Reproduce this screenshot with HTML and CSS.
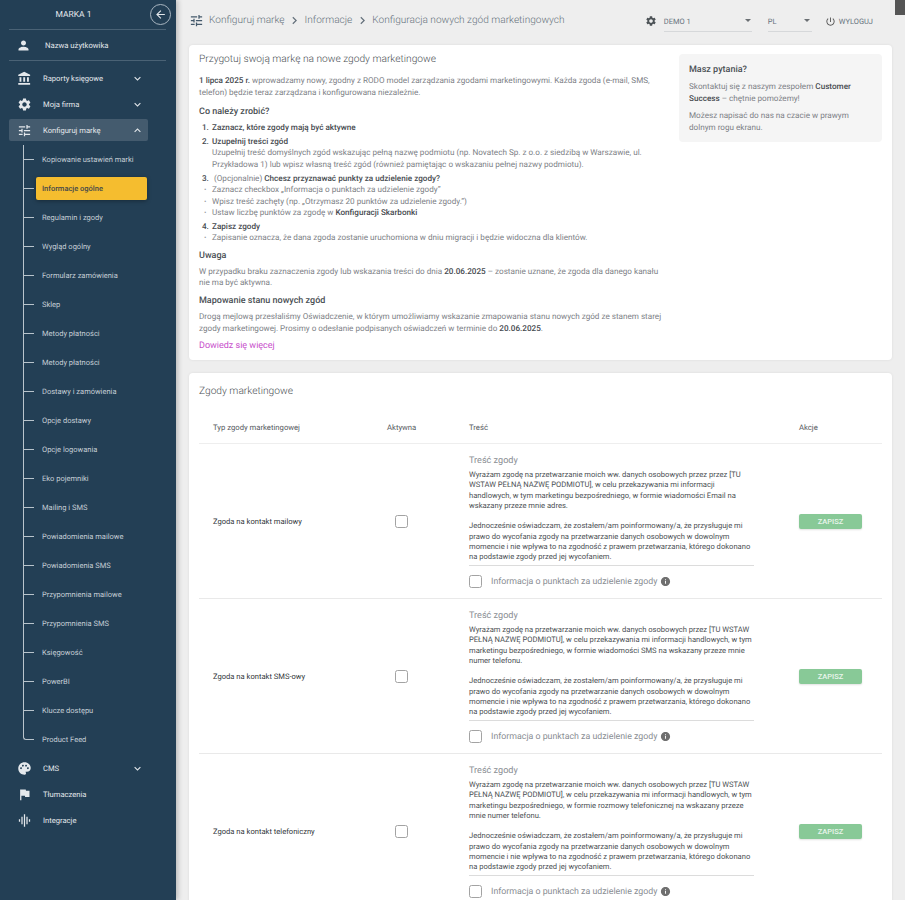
FILE: index.html
```html
<!DOCTYPE html>
<html lang="pl">
<head>
<meta charset="utf-8">
<title>Konfiguracja nowych zgód marketingowych</title>
<link rel="stylesheet" href="styles.css">
</head>
<body>
<svg class="sprite" aria-hidden="true">
<symbol id="i-person" viewBox="0 0 24 24"><path d="M12 12c2.21 0 4-1.79 4-4s-1.79-4-4-4-4 1.79-4 4 1.79 4 4 4zm0 2c-2.67 0-8 1.34-8 4v2h16v-2c0-2.66-5.33-4-8-4z"/></symbol>
<symbol id="i-bank" viewBox="0 0 24 24"><path d="M4 10v7h3v-7H4zm6 0v7h3v-7h-3zM2 22h19v-3H2v3zm14-12v7h3v-7h-3zm-4.5-9L2 6v2h19V6l-9.5-5z"/></symbol>
<symbol id="i-gear" viewBox="0 0 24 24"><path d="M19.14 12.94c.04-.3.06-.61.06-.94 0-.32-.02-.64-.07-.94l2.03-1.58c.18-.14.23-.41.12-.61l-1.92-3.32c-.12-.22-.37-.29-.59-.22l-2.39.96c-.5-.38-1.03-.7-1.62-.94l-.36-2.54c-.04-.24-.24-.41-.48-.41h-3.84c-.24 0-.43.17-.47.41l-.36 2.54c-.59.24-1.13.57-1.62.94l-2.39-.96c-.22-.08-.47 0-.59.22L2.74 8.87c-.12.21-.08.47.12.61l2.03 1.58c-.05.3-.09.63-.09.94s.02.64.07.94l-2.03 1.58c-.18.14-.23.41-.12.61l1.92 3.32c.12.22.37.29.59.22l2.39-.96c.5.38 1.03.7 1.62.94l.36 2.54c.05.24.24.41.48.41h3.84c.24 0 .44-.17.47-.41l.36-2.54c.59-.24 1.13-.56 1.62-.94l2.39.96c.22.08.47 0 .59-.22l1.92-3.32c.12-.22.07-.47-.12-.61l-2.01-1.58zM12 15.6c-1.98 0-3.6-1.62-3.6-3.6s1.62-3.6 3.6-3.6 3.6 1.62 3.6 3.6-1.62 3.6-3.6 3.6z"/></symbol>
<symbol id="i-tune" viewBox="0 0 24 24"><path d="M3 17v2h6v-2H3zM3 5v2h10V5H3zm10 16v-2h8v-2h-8v-2h-2v6h2zM7 9v2H3v2h4v2h2V9H7zm14 4v-2H11v2h10zm-6-4h2V7h4V5h-4V3h-2v6z"/></symbol>
<symbol id="i-palette" viewBox="0 0 24 24"><path d="M12 2C6.49 2 2 6.49 2 12s4.49 10 10 10c1.38 0 2.5-1.12 2.5-2.5 0-.61-.23-1.2-.64-1.67-.08-.1-.13-.21-.13-.33 0-.28.22-.5.5-.5H16c3.31 0 6-2.69 6-6 0-4.96-4.49-9-10-9zm5.5 11c-.83 0-1.5-.67-1.5-1.5s.67-1.5 1.5-1.5 1.5.67 1.5 1.5-.67 1.5-1.5 1.5zm-3-4c-.83 0-1.5-.67-1.5-1.5S13.67 6 14.5 6s1.5.67 1.5 1.5S15.33 9 14.5 9zM5 11.5c0-.83.67-1.5 1.5-1.5s1.5.67 1.5 1.5S7.33 13 6.5 13 5 12.33 5 11.5zm6-4c0 .83-.67 1.5-1.5 1.5S8 8.33 8 7.5 8.67 6 9.5 6s1.5.67 1.5 1.5z"/></symbol>
<symbol id="i-flag" viewBox="0 0 24 24"><path d="M14.4 6L14 4H5v17h2v-7h5.6l.4 2h7V6z"/></symbol>
<symbol id="i-eq" viewBox="0 0 24 24"><path d="M7 18h2V6H7v12zm4 4h2V2h-2v20zm-8-8h2v-4H3v4zm12 4h2V6h-2v12zm4-8v4h2v-4h-2z"/></symbol>
<symbol id="i-power" viewBox="0 0 24 24"><path d="M13 3h-2v10h2V3zm4.83 2.17l-1.42 1.42C17.99 7.86 19 9.81 19 12c0 3.87-3.13 7-7 7s-7-3.13-7-7c0-2.19 1.01-4.14 2.58-5.42L6.17 5.17C4.23 6.82 3 9.26 3 12c0 4.97 4.03 9 9 9s9-4.03 9-9c0-2.74-1.23-5.18-3.17-6.83z"/></symbol>
<symbol id="i-info" viewBox="0 0 24 24"><path d="M12 2C6.48 2 2 6.48 2 12s4.48 10 10 10 10-4.48 10-10S17.52 2 12 2zm1 15h-2v-6h2v6zm0-8h-2V7h2v2z"/></symbol>
<symbol id="i-back" viewBox="0 0 24 24"><path d="M20 11H7.83l5.59-5.59L12 4l-8 8 8 8 1.41-1.41L7.83 13H20v-2z"/></symbol>
<symbol id="i-down" viewBox="0 0 24 24"><path d="M16.59 8.59L12 13.17 7.41 8.59 6 10l6 6 6-6z"/></symbol>
<symbol id="i-up" viewBox="0 0 24 24"><path d="M12 8l-6 6 1.41 1.41L12 10.83l4.59 4.58L18 14z"/></symbol>
<symbol id="i-right" viewBox="0 0 24 24"><path d="M10 6L8.59 7.41 13.17 12l-4.58 4.59L10 18l6-6z"/></symbol>
</svg>

<div class="app">
  <aside class="sidebar">
    <div class="brand">
      <span class="brand-name">MARKA 1</span>
      <span class="back"><svg class="ic-back"><use href="#i-back"/></svg></span>
    </div>
    <div class="user">
      <svg class="ic-user"><use href="#i-person"/></svg>
      <span>Nazwa użytkowika</span>
    </div>
    <nav class="menu">
      <div class="item"><svg class="ic"><use href="#i-bank"/></svg><span class="label">Raporty księgowe</span><svg class="chev"><use href="#i-down"/></svg></div>
      <div class="item"><svg class="ic"><use href="#i-gear"/></svg><span class="label">Moja firma</span><svg class="chev"><use href="#i-down"/></svg></div>
      <div class="item open"><svg class="ic"><use href="#i-tune"/></svg><span class="label">Konfiguruj markę</span><svg class="chev"><use href="#i-up"/></svg></div>
      <ul class="sub">
        <li><i class="tick"></i><span class="sub-label">Kopiowanie ustawień marki</span></li>
        <li><i class="tick"></i><span class="sub-label current">Informacje ogólne</span></li>
        <li><i class="tick"></i><span class="sub-label">Regulamin i zgody</span></li>
        <li><i class="tick"></i><span class="sub-label">Wygląd ogólny</span></li>
        <li><i class="tick"></i><span class="sub-label">Formularz zamówienia</span></li>
        <li><i class="tick"></i><span class="sub-label">Sklep</span></li>
        <li><i class="tick"></i><span class="sub-label">Metody płatności</span></li>
        <li><i class="tick"></i><span class="sub-label">Metody płatności</span></li>
        <li><i class="tick"></i><span class="sub-label">Dostawy i zamówienia</span></li>
        <li><i class="tick"></i><span class="sub-label">Opcje dostawy</span></li>
        <li><i class="tick"></i><span class="sub-label">Opcje logowania</span></li>
        <li><i class="tick"></i><span class="sub-label">Eko pojemniki</span></li>
        <li><i class="tick"></i><span class="sub-label">Mailing i SMS</span></li>
        <li><i class="tick"></i><span class="sub-label">Powiadomienia mailowe</span></li>
        <li><i class="tick"></i><span class="sub-label">Powiadomienia SMS</span></li>
        <li><i class="tick"></i><span class="sub-label">Przypomnienia mailowe</span></li>
        <li><i class="tick"></i><span class="sub-label">Przypomnienia SMS</span></li>
        <li><i class="tick"></i><span class="sub-label">Księgowość</span></li>
        <li><i class="tick"></i><span class="sub-label">PowerBI</span></li>
        <li><i class="tick"></i><span class="sub-label">Klucze dostępu</span></li>
        <li class="last"><i class="tick"></i><span class="sub-label">Product Feed</span></li>
      </ul>
      <div class="item"><svg class="ic"><use href="#i-palette"/></svg><span class="label">CMS</span><svg class="chev"><use href="#i-down"/></svg></div>
      <div class="item"><svg class="ic"><use href="#i-flag"/></svg><span class="label">Tłumaczenia</span></div>
      <div class="item"><svg class="ic"><use href="#i-eq"/></svg><span class="label">Integracje</span></div>
    </nav>
  </aside>

  <main class="main">
    <div class="scroll-thumb"></div>
    <header class="topbar">
      <div class="crumbs">
        <svg class="crumb-ic"><use href="#i-tune"/></svg>
        <span>Konfiguruj markę</span>
        <svg class="crumb-sep"><use href="#i-right"/></svg>
        <span>Informacje</span>
        <svg class="crumb-sep"><use href="#i-right"/></svg>
        <span>Konfiguracja nowych zgód marketingowych</span>
      </div>
      <div class="tools">
        <svg class="tool-gear"><use href="#i-gear"/></svg>
        <div class="select demo"><span>DEMO 1</span><i class="caret"></i></div>
        <div class="select lang"><span>PL</span><i class="caret"></i></div>
        <div class="logout"><svg class="power"><use href="#i-power"/></svg><span>WYLOGUJ</span></div>
      </div>
    </header>

    <section class="card intro">
      <div class="intro-main">
        <h2 class="card-title">Przygotuj swoją markę na nowe zgody marketingowe</h2>
        <p class="p-lead"><b>1 lipca 2025 r.</b> wprowadzamy nowy, zgodny z RODO model zarządzania zgodami marketingowymi. Każda zgoda (e-mail, SMS, telefon) będzie teraz zarządzana i konfigurowana niezależnie.</p>
        <h3 class="h-todo">Co należy zrobić?</h3>
        <ol class="steps">
          <li class="step"><span class="num">1.</span><div><b>Zaznacz, które zgody mają być aktywne</b></div></li>
          <li class="step"><span class="num">2.</span><div><b>Uzupełnij treści zgód</b><br>Uzupełnij treść domyślnych zgód wskazując pełną nazwę podmiotu (np. Novatech Sp. z o.o. z siedzibą w Warszawie, ul. Przykładowa 1) lub wpisz własną treść zgód (również pamiętając o wskazaniu pełnej nazwy podmiotu).</div></li>
          <li class="step"><span class="num"><b>3.</b></span><div class="opt">(Opcjonalnie) <b>Chcesz przyznawać punkty za udzielenie zgody?</b></div></li>
          <li class="dot">Zaznacz checkbox „Informacja o punktach za udzielenie zgody”</li>
          <li class="dot">Wpisz treść zachęty (np. „Otrzymasz 20 punktów za udzielenie zgody.”)</li>
          <li class="dot"><span>Ustaw liczbę punktów za zgodę w <b>Konfiguracji Skarbonki</b></span></li>
          <li class="step"><span class="num">4.</span><div><b>Zapisz zgody</b></div></li>
          <li class="dot">Zapisanie oznacza, że dana zgoda zostanie uruchomiona w dniu migracji i będzie widoczna dla klientów.</li>
        </ol>
        <h3 class="h-sec">Uwaga</h3>
        <p class="p-sec">W przypadku braku zaznaczenia zgody lub wskazania treści do dnia <b>20.06.2025</b> – zostanie uznane, że zgoda dla danego kanału nie ma być aktywna.</p>
        <h3 class="h-sec">Mapowanie stanu nowych zgód</h3>
        <p class="p-sec p-map">Drogą mejlową przesłaliśmy Oświadczenie, w którym umożliwiamy wskazanie zmapowania stanu nowych zgód ze stanem starej zgody marketingowej. Prosimy o odesłanie podpisanych oświadczeń w terminie do <b>20.06.2025</b>.</p>
        <a class="more">Dowiedz się więcej</a>
      </div>
      <aside class="help">
        <h3 class="help-title">Masz pytania?</h3>
        <p>Skontaktuj się z naszym zespołem <b>Customer Success</b> – chętnie pomożemy!</p>
        <p>Możesz napisać do nas na czacie w prawym dolnym rogu ekranu.</p>
      </aside>
    </section>

    <section class="card consents">
      <h2 class="card-title">Zgody marketingowe</h2>
      <div class="row head">
        <div class="cell">Typ zgody marketingowej</div>
        <div class="cell">Aktywna</div>
        <div class="cell">Treść</div>
        <div class="cell">Akcje</div>
      </div>

      <div class="row">
        <div class="cell name">Zgoda na kontakt mailowy</div>
        <div class="cell"><span class="check"></span></div>
        <div class="cell body">
          <div class="field-label">Treść zgody</div>
          <div class="field-text">Wyrażam zgodę na przetwarzanie moich ww. danych osobowych przez przez [TU WSTAW PEŁNĄ NAZWĘ PODMIOTU], w celu przekazywania mi informacji handlowych, w tym marketingu bezpośredniego, w formie wiadomości Email na wskazany przeze mnie adres.<br><br>Jednocześnie oświadczam, że zostałem/am poinformowany/a, że przysługuje mi prawo do wycofania zgody na przetwarzanie danych osobowych w dowolnym momencie i nie wpływa to na zgodność z prawem przetwarzania, którego dokonano na podstawie zgody przed jej wycofaniem.</div>
          <div class="points"><span class="check"></span><span class="points-label">Informacja o punktach za udzielenie zgody</span><svg class="info"><use href="#i-info"/></svg></div>
        </div>
        <div class="cell"><button class="save">ZAPISZ</button></div>
      </div>

      <div class="row">
        <div class="cell name">Zgoda na kontakt SMS-owy</div>
        <div class="cell"><span class="check"></span></div>
        <div class="cell body">
          <div class="field-label">Treść zgody</div>
          <div class="field-text">Wyrażam zgodę na przetwarzanie moich ww. danych osobowych przez [TU WSTAW PEŁNĄ NAZWĘ PODMIOTU], w celu przekazywania mi informacji handlowych, w tym marketingu bezpośredniego, w formie wiadomości SMS na wskazany przeze mnie numer telefonu.<br><br>Jednocześnie oświadczam, że zostałem/am poinformowany/a, że przysługuje mi prawo do wycofania zgody na przetwarzanie danych osobowych w dowolnym momencie i nie wpływa to na zgodność z prawem przetwarzania, którego dokonano na podstawie zgody przed jej wycofaniem.</div>
          <div class="points"><span class="check"></span><span class="points-label">Informacja o punktach za udzielenie zgody</span><svg class="info"><use href="#i-info"/></svg></div>
        </div>
        <div class="cell"><button class="save">ZAPISZ</button></div>
      </div>

      <div class="row">
        <div class="cell name">Zgoda na kontakt telefoniczny</div>
        <div class="cell"><span class="check"></span></div>
        <div class="cell body">
          <div class="field-label">Treść zgody</div>
          <div class="field-text">Wyrażam zgodę na przetwarzanie moich ww. danych osobowych przez [TU WSTAW PEŁNĄ NAZWĘ PODMIOTU], w celu przekazywania mi informacji handlowych, w tym marketingu bezpośredniego, w formie rozmowy telefonicznej na wskazany przeze mnie numer telefonu.<br><br>Jednocześnie oświadczam, że zostałem/am poinformowany/a, że przysługuje mi prawo do wycofania zgody na przetwarzanie danych osobowych w dowolnym momencie i nie wpływa to na zgodność z prawem przetwarzania, którego dokonano na podstawie zgody przed jej wycofaniem.</div>
          <div class="points"><span class="check"></span><span class="points-label">Informacja o punktach za udzielenie zgody</span><svg class="info"><use href="#i-info"/></svg></div>
        </div>
        <div class="cell"><button class="save">ZAPISZ</button></div>
      </div>
    </section>
  </main>
</div>
</body>
</html>
```

FILE: styles.css
```css
* { box-sizing: border-box; }
html, body { margin: 0; height: 900px; overflow: hidden; }
body { font-family: Roboto, "Liberation Sans", sans-serif; background: #eeeeee; color: #7c8085; text-rendering: geometricPrecision; }
.sprite { display: none; }
svg { fill: currentColor; display: block; flex: none; }
h2, h3, p, ul, ol { margin: 0; padding: 0; list-style: none; font-weight: 400; }
b { font-weight: 500; color: #45494e; }

.app { display: flex; height: 900px; }

/* sidebar */
.sidebar { width: 176px; flex: none; background: #233f55; color: #e4e8ec; box-shadow: 2px 0 5px rgba(0,0,0,.22); z-index: 1; }
.brand { height: 30px; margin: 0 10px 0 9px; display: flex; align-items: center; border-bottom: 1px solid #4a6275; }
.brand-name { flex: 1; text-align: center; font-size: 8.5px; padding-right: 12px; }
.back { width: 21px; height: 21px; border: 1px solid #a9b6c1; border-radius: 50%; display: flex; align-items: center; justify-content: center; margin-right: -5px; }
.ic-back { width: 13px; height: 13px; }
.user { height: 31px; margin: 0 10px 0 9px; display: flex; align-items: center; border-bottom: 1px solid #4a6275; font-size: 7.7px; }
.ic-user { width: 15px; height: 15px; margin-left: 7px; margin-right: 14px; }
.menu { padding-top: 2px; }
.item { height: 22px; margin: 4px 28px 4px 9px; display: flex; align-items: center; padding-left: 8px; font-size: 7.6px; border-radius: 2px; }
.item.open { background: #445b6e; }
.ic { width: 15px; height: 15px; margin-right: 11px; }
.label { flex: 1; }
.chev { width: 13px; height: 13px; margin-right: 4px; }
.sub { margin-left: 23px; margin-bottom: -1px; font-size: 7.5px; color: #c5ced5; }
.sub li { height: 29px; display: flex; align-items: center; border-left: 1px solid #b9c4cc; }
.tick { width: 10px; height: 1px; background: #b9c4cc; flex: none; }
.sub li.last { border-left: 0; }
.sub li.last .tick { height: 15px; align-self: flex-start; background: none; border-left: 1px solid #b9c4cc; border-bottom: 1px solid #b9c4cc; border-bottom-left-radius: 3px; width: 11px; }
.sub-label { margin-left: 2px; padding-left: 6px; width: 111px; white-space: nowrap; }
.sub-label.current { height: 23px; display: flex; align-items: center; background: #f5bd2f; color: #46494a; font-weight: 500; border-radius: 2px; box-shadow: 0 1px 4px rgba(0,0,0,.35); }

/* main */
.main { flex: 1; min-width: 0; padding: 0 13px; position: relative; }
.scroll-thumb { position: absolute; top: 0; right: 0; width: 10px; height: 15px; background: #555; }
.topbar { height: 45px; display: flex; align-items: center; justify-content: space-between; color: #66727d; padding-bottom: 4px; }
.crumbs { display: flex; align-items: center; font-size: 10.1px; font-weight: 300; }
.crumb-ic { width: 15px; height: 15px; margin-right: 5px; color: #44596b; }
.crumb-sep { width: 15px; height: 15px; margin: 0 2.5px; }
.tools { display: flex; align-items: center; margin-right: 19px; }
.tool-gear { width: 12px; height: 12px; color: #4c5256; margin-right: 7px; }
.select { height: 17px; display: flex; align-items: center; justify-content: space-between; border-bottom: 1px solid #d6d8da; font-size: 7.5px; margin-top: 5px; padding-bottom: 2px; }
.demo { width: 88px; margin-right: 16px; padding-right: 1px; }
.lang { width: 44px; margin-right: 13px; padding-right: 2px; }
.caret { width: 0; height: 0; border-left: 3.5px solid transparent; border-right: 3.5px solid transparent; border-top: 3.5px solid #6a6f73; margin-bottom: 3px; }
.logout { display: flex; align-items: center; font-size: 7.5px; margin-top: 1px; }
.power { width: 11px; height: 11px; margin-right: 3px; color: #555; }

.card { background: #fff; border-radius: 4px; box-shadow: 0 0 3px rgba(0,0,0,.08); }
.card-title { font-size: 10.2px; color: #4a4f54; line-height: 14px; font-weight: 300; }

.intro { height: 315px; padding: 8px 10px 0; display: flex; justify-content: space-between; }
.intro-main { width: 465px; font-size: 8.15px; line-height: 11.5px; }
.p-lead { margin-top: 8.25px; }
.h-todo { margin-top: 7.25px; font-size: 9px; font-weight: 500; color: #4a4f54; line-height: 12px; }
.steps { margin-top: 4.75px; }
.step { display: flex; margin-top: 2.2px; }
.step:first-child { margin-top: 0; }
.num { width: 10px; margin-left: 3px; flex: none; color: #45494e; font-weight: 500; }
.opt { margin-left: 2px; }
.dot { padding-left: 13px; display: flex; }
.dot::before { content: "·"; width: 8px; margin-left: -8px; flex: none; font-weight: 700; }
.h-sec { margin-top: 6px; font-size: 9px; font-weight: 500; color: #4a4f54; line-height: 12px; }
.p-sec { margin-top: 3.75px; }
.p-map { margin-top: 4.5px; }
.more { display: block; margin-top: 6px; color: #c74ecb; font-size: 9px; line-height: 12px; }
.help { width: 203px; height: 88px; margin-top: 1px; background: #f5f5f5; border-radius: 4px; padding: 10px 10px; font-size: 8.15px; line-height: 12px; }
.help-title { font-size: 9px; font-weight: 500; color: #4a4f54; margin-bottom: 4px; }
.help p { margin-bottom: 5px; }

.consents { margin-top: 13px; padding: 12px 10px 0; }
.consents > .card-title { margin-bottom: 12px; }
.row { display: grid; grid-template-columns: 174px 82px 330px 1fr; align-items: center; border-bottom: 1px solid #e9e9e9; }
.row.head { height: 33px; font-size: 7.7px; border-bottom: 1px solid #eeeeee; color: #55595e; }
.cell { padding-left: 14px; }
.name { font-size: 7.6px; color: #33373b; }
.check { display: block; width: 13px; height: 13px; border: 1px solid #a3a3a3; border-radius: 2.5px; background: #fff; flex: none; margin-left: 8px; }
.body { padding-top: 11px; height: 154px; }
.field-label { font-size: 9.1px; color: #8a8e93; line-height: 12px; margin-bottom: 3px; }
.field-text { width: 285px; font-size: 7.6px; line-height: 10.25px; color: #4b4f53; border-bottom: 1px solid #dcdcdc; height: 96px; }
.points { display: flex; align-items: center; margin-top: 9px; }
.points .check { margin-left: 0; }
.points-label { margin-left: 9px; font-size: 8.8px; color: #8a8e93; }
.info { width: 11px; height: 11px; color: #6f6f6f; margin-left: 3px; }
.save { display: block; width: 63px; height: 15px; padding: 0; border: 0; border-radius: 2px; background: #88c997; color: #e8f5ec; font: 500 7.5px Roboto, sans-serif; box-shadow: 0 1px 2px rgba(0,0,0,.12); }
```
